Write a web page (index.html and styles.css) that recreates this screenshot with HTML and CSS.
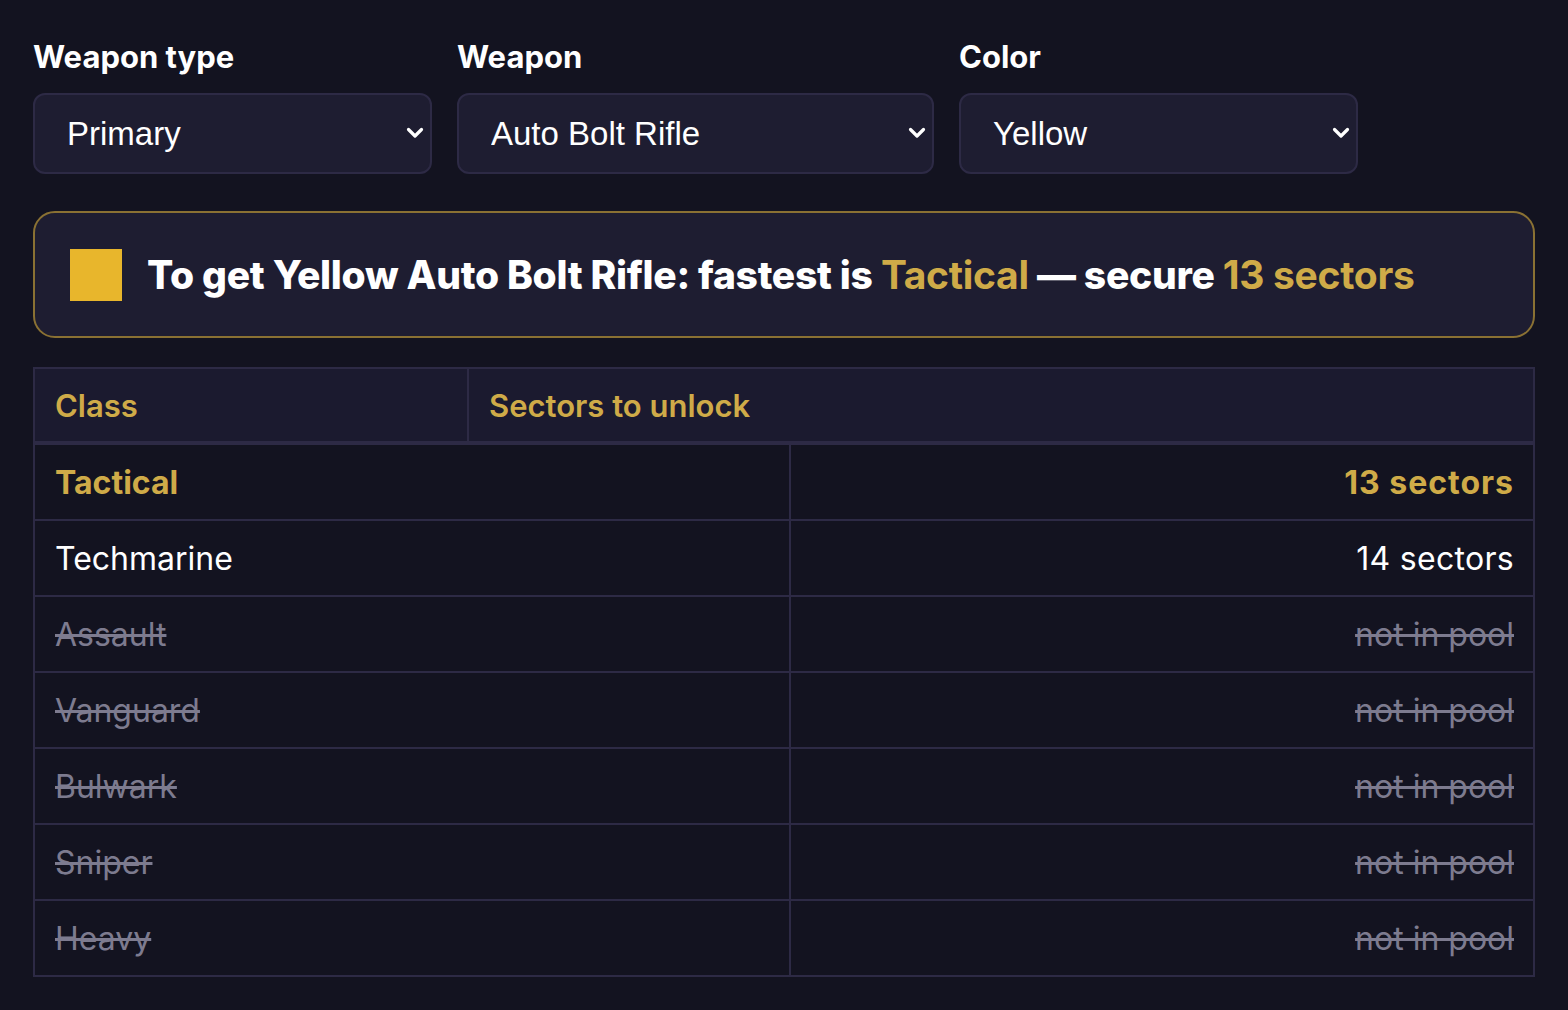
FILE: index.html
```html
<!DOCTYPE html>
<html lang="en">
<head>
    <meta charset="UTF-8">
    <meta name="viewport" content="width=device-width, initial-scale=1.0">
    <title>Weapon unlocks</title>
    <link rel="stylesheet" href="styles.css">
</head>
<body>
    <div class="page">
        <div class="filters">
            <div class="field field-type">
                <label for="type">Weapon type</label>
                <div class="select-wrap">
                    <select id="type">
                        <option>Primary</option>
                        <option>Secondary</option>
                        <option>Melee</option>
                    </select>
                    <svg class="chevron" viewBox="0 0 18 12" width="18" height="12"><path d="M2.5 2.5l6.5 6.5 6.5-6.5" fill="none" stroke="#fff" stroke-width="3.2" stroke-linecap="round" stroke-linejoin="round"/></svg>
                </div>
            </div>
            <div class="field field-weapon">
                <label for="weapon">Weapon</label>
                <div class="select-wrap">
                    <select id="weapon">
                        <option>Auto Bolt Rifle</option>
                    </select>
                    <svg class="chevron" viewBox="0 0 18 12" width="18" height="12"><path d="M2.5 2.5l6.5 6.5 6.5-6.5" fill="none" stroke="#fff" stroke-width="3.2" stroke-linecap="round" stroke-linejoin="round"/></svg>
                </div>
            </div>
            <div class="field field-color">
                <label for="color">Color</label>
                <div class="select-wrap">
                    <select id="color">
                        <option>Yellow</option>
                    </select>
                    <svg class="chevron" viewBox="0 0 18 12" width="18" height="12"><path d="M2.5 2.5l6.5 6.5 6.5-6.5" fill="none" stroke="#fff" stroke-width="3.2" stroke-linecap="round" stroke-linejoin="round"/></svg>
                </div>
            </div>
        </div>

        <div class="answer">
            <span class="swatch"></span>
            <p>To get Yellow Auto Bolt Rifle: fastest is <span class="hl">Tactical</span> — secure <span class="hl">13 sectors</span></p>
        </div>

        <table class="classes">
            <colgroup>
                <col class="c1">
                <col class="c2">
                <col class="c3">
            </colgroup>
            <thead>
                <tr>
                    <th>Class</th>
                    <th colspan="2">Sectors to unlock</th>
                </tr>
            </thead>
            <tbody>
                <tr class="best">
                    <td colspan="2">Tactical</td>
                    <td class="num">13 sectors</td>
                </tr>
                <tr>
                    <td colspan="2">Techmarine</td>
                    <td class="num">14 sectors</td>
                </tr>
                <tr class="out">
                    <td colspan="2">Assault</td>
                    <td class="num">not in pool</td>
                </tr>
                <tr class="out">
                    <td colspan="2">Vanguard</td>
                    <td class="num">not in pool</td>
                </tr>
                <tr class="out">
                    <td colspan="2">Bulwark</td>
                    <td class="num">not in pool</td>
                </tr>
                <tr class="out">
                    <td colspan="2">Sniper</td>
                    <td class="num">not in pool</td>
                </tr>
                <tr class="out">
                    <td colspan="2">Heavy</td>
                    <td class="num">not in pool</td>
                </tr>
            </tbody>
        </table>
    </div>
</body>
</html>
```

FILE: styles.css
```css
body {
    margin: 0;
    background-color: #131320;
    color: #fff;
    font-family: 'Inter', 'Noto Sans', sans-serif;
}

.page {
    padding: 38px 33px 30px 33px;
}

.filters {
    display: flex;
    gap: 25px;
}

.field label {
    display: block;
    font-size: 31px;
    font-weight: 700;
    line-height: 38px;
    margin-bottom: 17px;
}

.field-type, .field-color {
    width: 399px;
}

.field-weapon {
    width: 477px;
}

.select-wrap {
    position: relative;
}

select {
    appearance: none;
    -webkit-appearance: none;
    width: 100%;
    height: 81px;
    padding: 0 60px 0 32px;
    background-color: #1e1d31;
    color: #fff;
    border: 2px solid #2d2a45;
    border-radius: 12px;
    font-family: 'Liberation Sans', Arial, sans-serif;
    font-size: 33px;
    outline: none;
}

.chevron {
    position: absolute;
    right: 8px;
    top: 34px;
    pointer-events: none;
}

.answer {
    display: flex;
    align-items: center;
    gap: 25px;
    margin-top: 37px;
    padding: 0 35px;
    height: 123px;
    background-color: #1e1d31;
    border: 2px solid #8a7133;
    border-radius: 22px;
}

.swatch {
    width: 52px;
    height: 52px;
    background-color: #e8b62c;
    flex-shrink: 0;
}

.answer p {
    margin: 0;
    font-size: 39px;
    font-weight: 800;
    letter-spacing: -0.3px;
}

.answer .hl {
    color: #cfab48;
    font-weight: 700;
}

.classes {
    width: 100%;
    margin-top: 29px;
    border-collapse: collapse;
    table-layout: fixed;
    border: 2px solid #2d2a45;
}

.c1 { width: 434px; }
.c2 { width: 322px; }

th, td {
    border: 2px solid #2d2a45;
    padding: 0 19px 0 20px;
    text-align: left;
}

th {
    height: 72px;
    background-color: #1b1a2f;
    color: #cfab48;
    font-size: 31px;
    font-weight: 600;
    border-bottom-width: 4px;
}

td {
    height: 74px;
    font-size: 32px;
    font-weight: 400;
}

td.num {
    text-align: right;
    letter-spacing: 0.3px;
}

.best td {
    color: #cfab48;
    font-weight: 700;
}

.best td.num {
    letter-spacing: 1px;
}

.out td {
    color: #7d7b8f;
    text-decoration: line-through;
}

.out td.num {
    letter-spacing: 0;
}
```
